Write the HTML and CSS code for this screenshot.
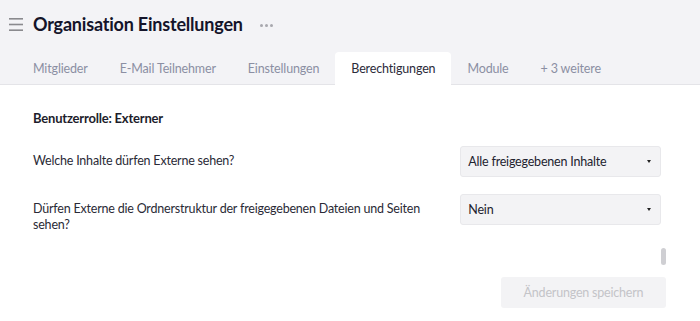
FILE: index.html
```html
<!DOCTYPE html>
<html lang="de">
<head>
<meta charset="utf-8">
<link rel="stylesheet" href="styles.css">
</head>
<body>
<div class="page">
  <header class="header">
    <div class="titlebar">
      <svg class="burger" width="14" height="13" viewBox="0 0 14 13"><rect x="0" y="0" width="14" height="1.6" fill="#8a8a8e"/><rect x="0" y="5.7" width="14" height="1.6" fill="#8a8a8e"/><rect x="0" y="11.4" width="14" height="1.6" fill="#8a8a8e"/></svg>
      <h1 class="title">Organisation Einstellungen</h1>
      <span class="more"><i></i><i></i><i></i></span>
    </div>
    <nav class="tabs">
      <span class="tab">Mitglieder</span>
      <span class="tab">E-Mail Teilnehmer</span>
      <span class="tab">Einstellungen</span>
      <span class="tab active">Berechtigungen</span>
      <span class="tab">Module</span>
      <span class="tab">+ 3 weitere</span>
    </nav>
  </header>
  <main class="content">
    <h2 class="role">Benutzerrolle: Externer</h2>
    <div class="row">
      <div class="question">Welche Inhalte dürfen Externe sehen?</div>
      <div class="select"><span>Alle freigegebenen Inhalte</span><span class="caret"></span></div>
    </div>
    <div class="row">
      <div class="question">Dürfen Externe die Ordnerstruktur der freigegebenen Dateien und Seiten sehen?</div>
      <div class="select"><span>Nein</span><span class="caret"></span></div>
    </div>
    <div class="scrollthumb"></div>
    <div class="actions">
      <button class="save" disabled>Änderungen speichern</button>
    </div>
  </main>
</div>
</body>
</html>
```
FILE: styles.css
```css
html, body { margin: 0; padding: 0; }
body {
  font-family: Lato, "Noto Sans", sans-serif;
  background: #ffffff;
  color: #1d1d2b;
  width: 700px;
  height: 321px;
  overflow: hidden;
}
.header {
  background: #f3f3f6;
  border-bottom: 1px solid #e4e4e8;
}
.titlebar {
  display: flex;
  align-items: center;
  height: 48px;
  padding-left: 9px;
}
.burger { margin-right: 10px; margin-top: 1px; }
.title {
  margin: 0;
  font-size: 18px;
  font-weight: 700;
  color: #14142a;
  letter-spacing: -0.2px;
}
.more {
  display: flex;
  gap: 2px;
  margin-left: 17px;
  margin-top: 2px;
}
.more i {
  display: block;
  width: 3px;
  height: 3px;
  border-radius: 50%;
  background: #a8a8ae;
}
.tabs {
  display: flex;
  padding-left: 17px;
  margin-top: 4px;
  height: 32px;
}
.tab {
  display: flex;
  align-items: center;
  padding: 0 16px;
  font-size: 12.5px;
  letter-spacing: -0.15px;
  color: #8b8fa3;
  border-radius: 4px 4px 0 0;
}
.tab.active {
  background: #ffffff;
  color: #2b2b3a;
  margin-bottom: -1px;
}
.content {
  position: relative;
  padding: 24px 34px 0 33px;
}
.role {
  margin: 0;
  font-size: 13px;
  font-weight: 700;
  color: #1d1d2b;
  height: 18px;
  line-height: 18px;
  letter-spacing: -0.2px;
}
.row {
  display: flex;
  justify-content: space-between;
  align-items: flex-start;
  gap: 28px;
  padding-right: 5px;
}
.row:first-of-type { margin-top: 19px; }
.row + .row { margin-top: 17px; }
.question {
  font-size: 12.5px;
  letter-spacing: -0.2px;
  line-height: 16px;
  color: #2a2a36;
  width: 400px;
  padding-top: 7px;
}
.select {
  width: 201px;
  height: 31px;
  box-sizing: border-box;
  background: #f3f3f5;
  border: 1px solid #e8e8eb;
  border-radius: 3px;
  display: flex;
  align-items: center;
  justify-content: space-between;
  padding: 0 9px 0 7px;
  font-size: 12.5px;
  letter-spacing: -0.2px;
  color: #22222e;
}
.caret {
  width: 0;
  height: 0;
  border-left: 2.5px solid transparent;
  border-right: 2.5px solid transparent;
  border-top: 3px solid #222;
}
.scrollthumb {
  position: absolute;
  right: 34px;
  top: 163px;
  width: 5px;
  height: 17px;
  border-radius: 3px;
  background: #cfcfd3;
}
.actions {
  display: flex;
  justify-content: flex-end;
  margin-top: 44px;
}
.save {
  width: 165px;
  height: 31px;
  background: #f3f3f5;
  border: none;
  border-radius: 3px;
  font-family: inherit;
  font-size: 12.5px;
  letter-spacing: -0.2px;
  color: #c4c4c8;
}
```
